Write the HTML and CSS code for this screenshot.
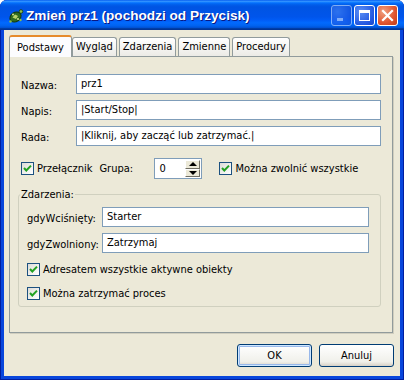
FILE: index.html
```html
<!DOCTYPE html>
<html lang="pl">
<head>
  <meta charset="UTF-8" />
  <title>Zmień prz1 (pochodzi od Przycisk)</title>
  <link rel="stylesheet" href="styles.css">
</head>
<body>
  <div class="window">
    <div class="titlebar">
      <svg class="app-icon" width="16" height="16" viewBox="0 0 16 16">
        <ellipse cx="7.5" cy="9" rx="6" ry="4.6" transform="rotate(-35 7.5 9)" fill="#2f6a1e" stroke="#143a0c" stroke-width="1"/>
        <path d="M4.5 9.5 L7 6.5 L10 8 L8 11 Z" fill="#b9d36a"/>
        <circle cx="5" cy="6.5" r="1" fill="#d8e890"/>
        <circle cx="10" cy="11" r="1" fill="#d8e890"/>
        <circle cx="13" cy="3.5" r="1.8" fill="#8fbf4a" stroke="#143a0c" stroke-width="0.8"/>
        <circle cx="2.5" cy="13.5" r="1.2" fill="#8fbf4a"/>
        <circle cx="12.5" cy="12" r="1.2" fill="#8fbf4a"/>
      </svg>
      <span class="title">Zmień prz1 (pochodzi od Przycisk)</span>
      <div class="caption-buttons">
        <span class="cap-btn cap-min"><i></i></span>
        <span class="cap-btn cap-max"><i></i></span>
        <span class="cap-btn cap-close">
          <svg width="19" height="19" viewBox="0 0 19 19"><path d="M5 5 L14 14 M14 5 L5 14" stroke="#fff" stroke-width="2.2" stroke-linecap="square"/></svg>
        </span>
      </div>
    </div>

    <div class="client">
      <div class="tabs">
        <div class="tab active">Podstawy</div>
        <div class="tab">Wygląd</div>
        <div class="tab">Zdarzenia</div>
        <div class="tab">Zmienne</div>
        <div class="tab">Procedury</div>
      </div>

      <div class="panel">
        <div class="field">
          <label>Nazwa:</label>
          <div class="edit">prz1</div>
        </div>
        <div class="field">
          <label>Napis:</label>
          <div class="edit">|Start/Stop|</div>
        </div>
        <div class="field">
          <label>Rada:</label>
          <div class="edit">|Kliknij, aby zacząć lub zatrzymać.|</div>
        </div>

        <div class="options">
          <span class="check"><span class="box"><svg width="11" height="11" viewBox="0 0 11 11"><path d="M2 5 L4.3 7.5 L9 2.6" fill="none" stroke="#21a121" stroke-width="2"/></svg></span>Przełącznik</span>
          <span class="group-label">Grupa:</span>
          <div class="spin">
            <span class="spin-value">0</span>
            <div class="spin-buttons">
              <span class="spin-btn"><i class="up"></i></span>
              <span class="spin-btn"><i class="down"></i></span>
            </div>
          </div>
          <span class="check"><span class="box"><svg width="11" height="11" viewBox="0 0 11 11"><path d="M2 5 L4.3 7.5 L9 2.6" fill="none" stroke="#21a121" stroke-width="2"/></svg></span>Można zwolnić wszystkie</span>
        </div>

        <div class="groupbox">
          <span class="legend">Zdarzenia:</span>
          <div class="field">
            <label class="wide">gdyWciśnięty:</label>
            <div class="edit">Starter</div>
          </div>
          <div class="field">
            <label class="wide">gdyZwolniony:</label>
            <div class="edit">Zatrzymaj</div>
          </div>
          <span class="check line"><span class="box"><svg width="11" height="11" viewBox="0 0 11 11"><path d="M2 5 L4.3 7.5 L9 2.6" fill="none" stroke="#21a121" stroke-width="2"/></svg></span>Adresatem wszystkie aktywne obiekty</span>
          <span class="check line"><span class="box"><svg width="11" height="11" viewBox="0 0 11 11"><path d="M2 5 L4.3 7.5 L9 2.6" fill="none" stroke="#21a121" stroke-width="2"/></svg></span>Można zatrzymać proces</span>
        </div>
      </div>

      <div class="dialog-buttons">
        <button class="btn default">OK</button>
        <button class="btn">Anuluj</button>
      </div>
    </div>
  </div>
</body>
</html>
```

FILE: styles.css
```css
body {
  margin: 0;
  background: #fff;
  font-family: 'DejaVu Sans Condensed', 'Liberation Sans', sans-serif;
  font-size: 11px;
  color: #000;
}
.window {
  width: 404px;
  height: 380px;
  display: flex;
  flex-direction: column;
  background: #0846dc;
  border-radius: 7px 7px 0 0;
  overflow: hidden;
  box-shadow: inset 1px 0 #001ea0, inset -1px 0 #001ea0, inset 0 -1px #001ea0;
}
.titlebar {
  height: 30px;
  flex: none;
  display: flex;
  align-items: center;
  padding: 0 6px 0 8px;
  background: linear-gradient(to bottom, #0058ee 0%, #3593ff 4%, #288eff 6%, #127dff 8%, #036ffc 10%, #0262ee 14%, #0057e5 20%, #0054e3 24%, #0055eb 56%, #005bf5 66%, #026afe 76%, #0062ef 86%, #0052d6 92%, #0040ab 94%, #003092 100%);
}
.app-icon {
  flex: none;
  margin-top: 1px;
}
.title {
  flex: 1;
  margin-left: 2px;
  color: #fff;
  font-family: 'Liberation Sans', sans-serif;
  font-weight: bold;
  font-size: 13.6px;
  text-shadow: 1px 1px #0a1883;
}
.caption-buttons {
  display: flex;
  gap: 2px;
}
.cap-btn {
  position: relative;
  width: 19px;
  height: 19px;
  border: 1px solid #fff;
  border-radius: 3px;
  background: radial-gradient(circle at 30% 30%, #5b8ff5, #2358e0 70%, #1a47c8);
}
.cap-min {
  opacity: 0.5;
}
.cap-min i {
  position: absolute;
  left: 5px;
  top: 12px;
  width: 6px;
  height: 3px;
  background: #fff;
}
.cap-max i {
  position: absolute;
  left: 4px;
  top: 4px;
  width: 9px;
  height: 7px;
  border: 1px solid #fff;
  border-top-width: 3px;
}
.cap-close {
  background: radial-gradient(circle at 30% 30%, #f0a080, #e0552f 60%, #c23b18);
}
.cap-close svg {
  display: block;
}
.client {
  flex: 1;
  margin: 0 4px 4px 4px;
  background: #ece9d8;
  display: flex;
  flex-direction: column;
}
.tabs {
  display: flex;
  align-items: flex-end;
  height: 21px;
  padding: 5px 0 0 5px;
  gap: 2px;
}
.tab {
  height: 18px;
  padding: 0 3px;
  line-height: 18px;
  border: 1px solid #919b9c;
  border-bottom: none;
  border-radius: 3px 3px 0 0;
  background: linear-gradient(to bottom, #fff, #ecebe6);
}
.tab.active {
  position: relative;
  z-index: 1;
  height: 20px;
  line-height: 22px;
  margin-bottom: -1px;
  margin-right: -2px;
  padding: 0 7px;
  background: #fcfcfe;
  border-top: 2px solid #e68b2c;
}
.panel {
  height: 258px;
  margin: 0 7px 0 5px;
  padding: 17px 11px 0 8px;
  border: 1px solid #919b9c;
  box-shadow: 1px 1px 0 #d0cebf;
}
.field {
  display: flex;
  align-items: center;
  height: 20px;
  margin-left: 3px;
}
.field + .field {
  margin-top: 6px;
}
.field label {
  width: 55px;
  flex: none;
  padding-top: 2px;
  color: #000;
}
.field label.wide {
  width: 75px;
}
.edit {
  flex: 1;
  height: 18px;
  line-height: 18px;
  padding: 0 4px;
  border: 1px solid #7f9db9;
  background: #fff;
  white-space: nowrap;
}
.options {
  display: flex;
  align-items: center;
  height: 21px;
  margin: 12px 0 0 3px;
}
.check {
  display: inline-flex;
  align-items: center;
}
.box {
  width: 11px;
  height: 11px;
  margin-right: 3px;
  border: 1px solid #1c5180;
  background: linear-gradient(135deg, #dcdcd7, #fff);
}
.box svg {
  display: block;
}
.group-label {
  margin-left: 7px;
  width: 55px;
}
.spin {
  display: flex;
  width: 46px;
  height: 19px;
  border: 1px solid #7f9db9;
  background: #fff;
  margin-right: 17px;
}
.spin-value {
  flex: 1;
  padding-left: 4px;
  line-height: 19px;
}
.spin-buttons {
  display: flex;
  flex-direction: column;
  width: 15px;
  margin: 1px 1px 1px 0;
}
.spin-btn {
  flex: 1;
  display: flex;
  align-items: center;
  justify-content: center;
  background: #ece9d8;
  border: 1px solid;
  border-color: #fff #716f64 #716f64 #fff;
}
.spin-btn i {
  width: 0;
  height: 0;
  border-left: 4px solid transparent;
  border-right: 4px solid transparent;
}
.spin-btn .up {
  border-bottom: 4px solid #000;
}
.spin-btn .down {
  border-top: 4px solid #000;
}
.groupbox {
  position: relative;
  margin-top: 15px;
  height: 99px;
  padding: 12px 11px 0 8px;
  border: 1px solid #d0d0bf;
  border-radius: 3px;
}
.groupbox .field {
  margin-left: 0;
}
.legend {
  position: absolute;
  top: -7px;
  left: 1px;
  padding: 0 1px;
  background: #ece9d8;
}
.check.line {
  display: flex;
  margin-top: 10px;
}
.check.line + .check.line {
  margin-top: 11px;
}
.dialog-buttons {
  display: flex;
  justify-content: flex-end;
  gap: 7px;
  padding: 11px 6px 0 0;
}
.btn {
  width: 75px;
  height: 23px;
  font: inherit;
  border: 1px solid #003c74;
  border-radius: 3px;
  background: linear-gradient(to bottom, #fff, #f0f0ea 80%, #d6d0c5);
}
.btn.default {
  box-shadow: inset 0 0 0 1px #cee7ff, inset 0 0 0 2px #98b8ea;
}
```
